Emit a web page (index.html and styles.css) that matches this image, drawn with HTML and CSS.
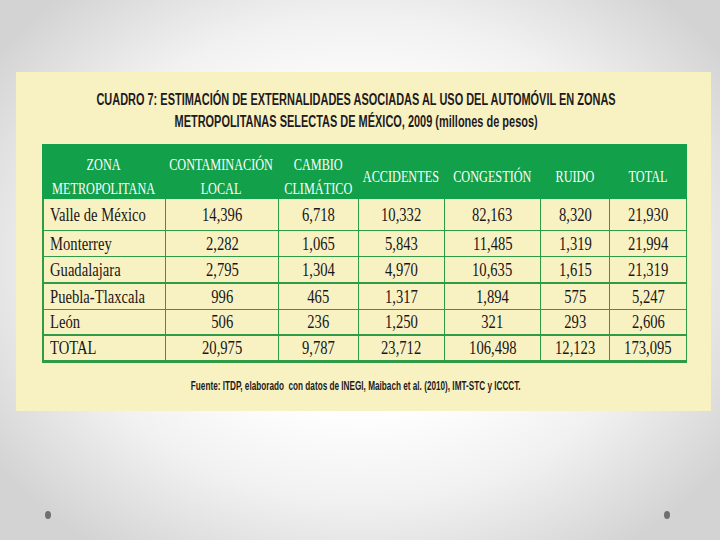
FILE: index.html
```html
<!DOCTYPE html>
<html lang="es">
<head>
<meta charset="utf-8">
<title>Cuadro 7</title>
<link rel="stylesheet" href="styles.css">
</head>
<body>
<div class="slide">
  <div class="panel">
    <div class="title">
      <span class="tl">CUADRO 7: ESTIMACIÓN DE EXTERNALIDADES ASOCIADAS AL USO DEL AUTOMÓVIL EN ZONAS</span>
      <span class="tl">METROPOLITANAS SELECTAS DE MÉXICO, 2009 (millones de pesos)</span>
    </div>
    <div class="table">
      <div class="row head">
        <div class="c"><span>ZONA<br>METROPOLITANA</span></div>
        <div class="c"><span>CONTAMINACIÓN<br>LOCAL</span></div>
        <div class="c"><span>CAMBIO<br>CLIMÁTICO</span></div>
        <div class="c"><span>ACCIDENTES</span></div>
        <div class="c"><span>CONGESTIÓN</span></div>
        <div class="c"><span>RUIDO</span></div>
        <div class="c"><span>TOTAL</span></div>
      </div>
      <div class="row d r1">
        <div class="c"><span>Valle de México</span></div>
        <div class="c"><span>14,396</span></div>
        <div class="c"><span>6,718</span></div>
        <div class="c"><span>10,332</span></div>
        <div class="c"><span>82,163</span></div>
        <div class="c"><span>8,320</span></div>
        <div class="c"><span>21,930</span></div>
      </div>
      <div class="row d r2">
        <div class="c"><span>Monterrey</span></div>
        <div class="c"><span>2,282</span></div>
        <div class="c"><span>1,065</span></div>
        <div class="c"><span>5,843</span></div>
        <div class="c"><span>11,485</span></div>
        <div class="c"><span>1,319</span></div>
        <div class="c"><span>21,994</span></div>
      </div>
      <div class="row d r3">
        <div class="c"><span>Guadalajara</span></div>
        <div class="c"><span>2,795</span></div>
        <div class="c"><span>1,304</span></div>
        <div class="c"><span>4,970</span></div>
        <div class="c"><span>10,635</span></div>
        <div class="c"><span>1,615</span></div>
        <div class="c"><span>21,319</span></div>
      </div>
      <div class="row d r4">
        <div class="c"><span>Puebla-Tlaxcala</span></div>
        <div class="c"><span>996</span></div>
        <div class="c"><span>465</span></div>
        <div class="c"><span>1,317</span></div>
        <div class="c"><span>1,894</span></div>
        <div class="c"><span>575</span></div>
        <div class="c"><span>5,247</span></div>
      </div>
      <div class="row d r5">
        <div class="c"><span>León</span></div>
        <div class="c"><span>506</span></div>
        <div class="c"><span>236</span></div>
        <div class="c"><span>1,250</span></div>
        <div class="c"><span>321</span></div>
        <div class="c"><span>293</span></div>
        <div class="c"><span>2,606</span></div>
      </div>
      <div class="row d r6">
        <div class="c"><span>TOTAL</span></div>
        <div class="c"><span>20,975</span></div>
        <div class="c"><span>9,787</span></div>
        <div class="c"><span>23,712</span></div>
        <div class="c"><span>106,498</span></div>
        <div class="c"><span>12,123</span></div>
        <div class="c"><span>173,095</span></div>
      </div>
    </div>
    <div class="source"><span>Fuente: ITDP, elaborado&nbsp; con datos de INEGI, Maibach et al. (2010), IMT-STC y ICCCT.</span></div>
  </div>
  <span class="dot dot-left"></span>
  <span class="dot dot-right"></span>
</div>
</body>
</html>
```
FILE: styles.css
```css
html, body {
  margin: 0;
  padding: 0;
}
body {
  width: 720px;
  height: 540px;
  overflow: hidden;
  background: radial-gradient(ellipse 62% 66% at 50% 48%, #ffffff 42%, #f1f1f1 68%, #d3d3d3 100%);
  font-family: "Liberation Serif", serif;
}
.slide {
  position: relative;
  height: 540px;
  box-sizing: border-box;
  padding: 72px 0 0 16px;
}
.panel {
  width: 695px;
  height: 339px;
  box-sizing: border-box;
  background: #f8f2c3;
  padding: 17px 0 0 26px;
}
.title {
  width: 628px;
  display: flex;
  flex-direction: column;
  align-items: center;
  font-family: "Liberation Sans", sans-serif;
  font-weight: bold;
  font-size: 16px;
  line-height: 22px;
  color: #1f1b1c;
}
.title .tl {
  white-space: nowrap;
  transform: scaleX(0.685);
}
.table {
  margin-top: 11px;
  width: 645px;
}
.row {
  display: grid;
  grid-template-columns: 123px 113px 80px 86px 96px 69px 78px;
  box-sizing: border-box;
}
.head {
  height: 55px;
  background: #12a04b;
  color: #ffffff;
  font-size: 17px;
  line-height: 24px;
}
.head .c {
  display: flex;
  justify-content: center;
  align-items: center;
  padding-top: 9px;
}
.head .c span {
  display: block;
  text-align: center;
  white-space: nowrap;
  transform: scaleX(0.72);
}
.d {
  border-bottom: 1px solid #2f9b47;
  color: #1a1617;
  font-size: 19px;
}
.d .c {
  display: flex;
  justify-content: center;
  align-items: center;
  border-left: 1px solid #2f9b47;
}
.d .c:first-child {
  border-left-width: 2px;
  justify-content: flex-start;
  padding-left: 6px;
}
.d .c:last-child {
  border-right: 1px solid #2f9b47;
}
.d .c span {
  display: block;
  white-space: nowrap;
  transform: scaleX(0.77);
}
.d .c:first-child span {
  transform-origin: left center;
}
.r1 { height: 32px; }
.r2 { height: 26px; }
.r3 { height: 27px; border-bottom-width: 2px; }
.r4 { height: 26px; }
.r5 { height: 26px; border-bottom-width: 2px; }
.r6 { height: 27px; border-bottom-width: 3px; }
.source {
  width: 628px;
  margin-top: 14px;
  display: flex;
  justify-content: center;
  font-family: "Liberation Sans", sans-serif;
  font-weight: bold;
  font-size: 13px;
  line-height: 18px;
  color: #1f1b1c;
}
.source span {
  display: block;
  white-space: nowrap;
  transform: scaleX(0.63);
}
.dot {
  position: absolute;
  top: 511px;
  width: 6px;
  height: 8px;
  border-radius: 50%;
  background: #6f6f6f;
}
.dot-left { left: 45px; }
.dot-right { left: 664px; }
```
